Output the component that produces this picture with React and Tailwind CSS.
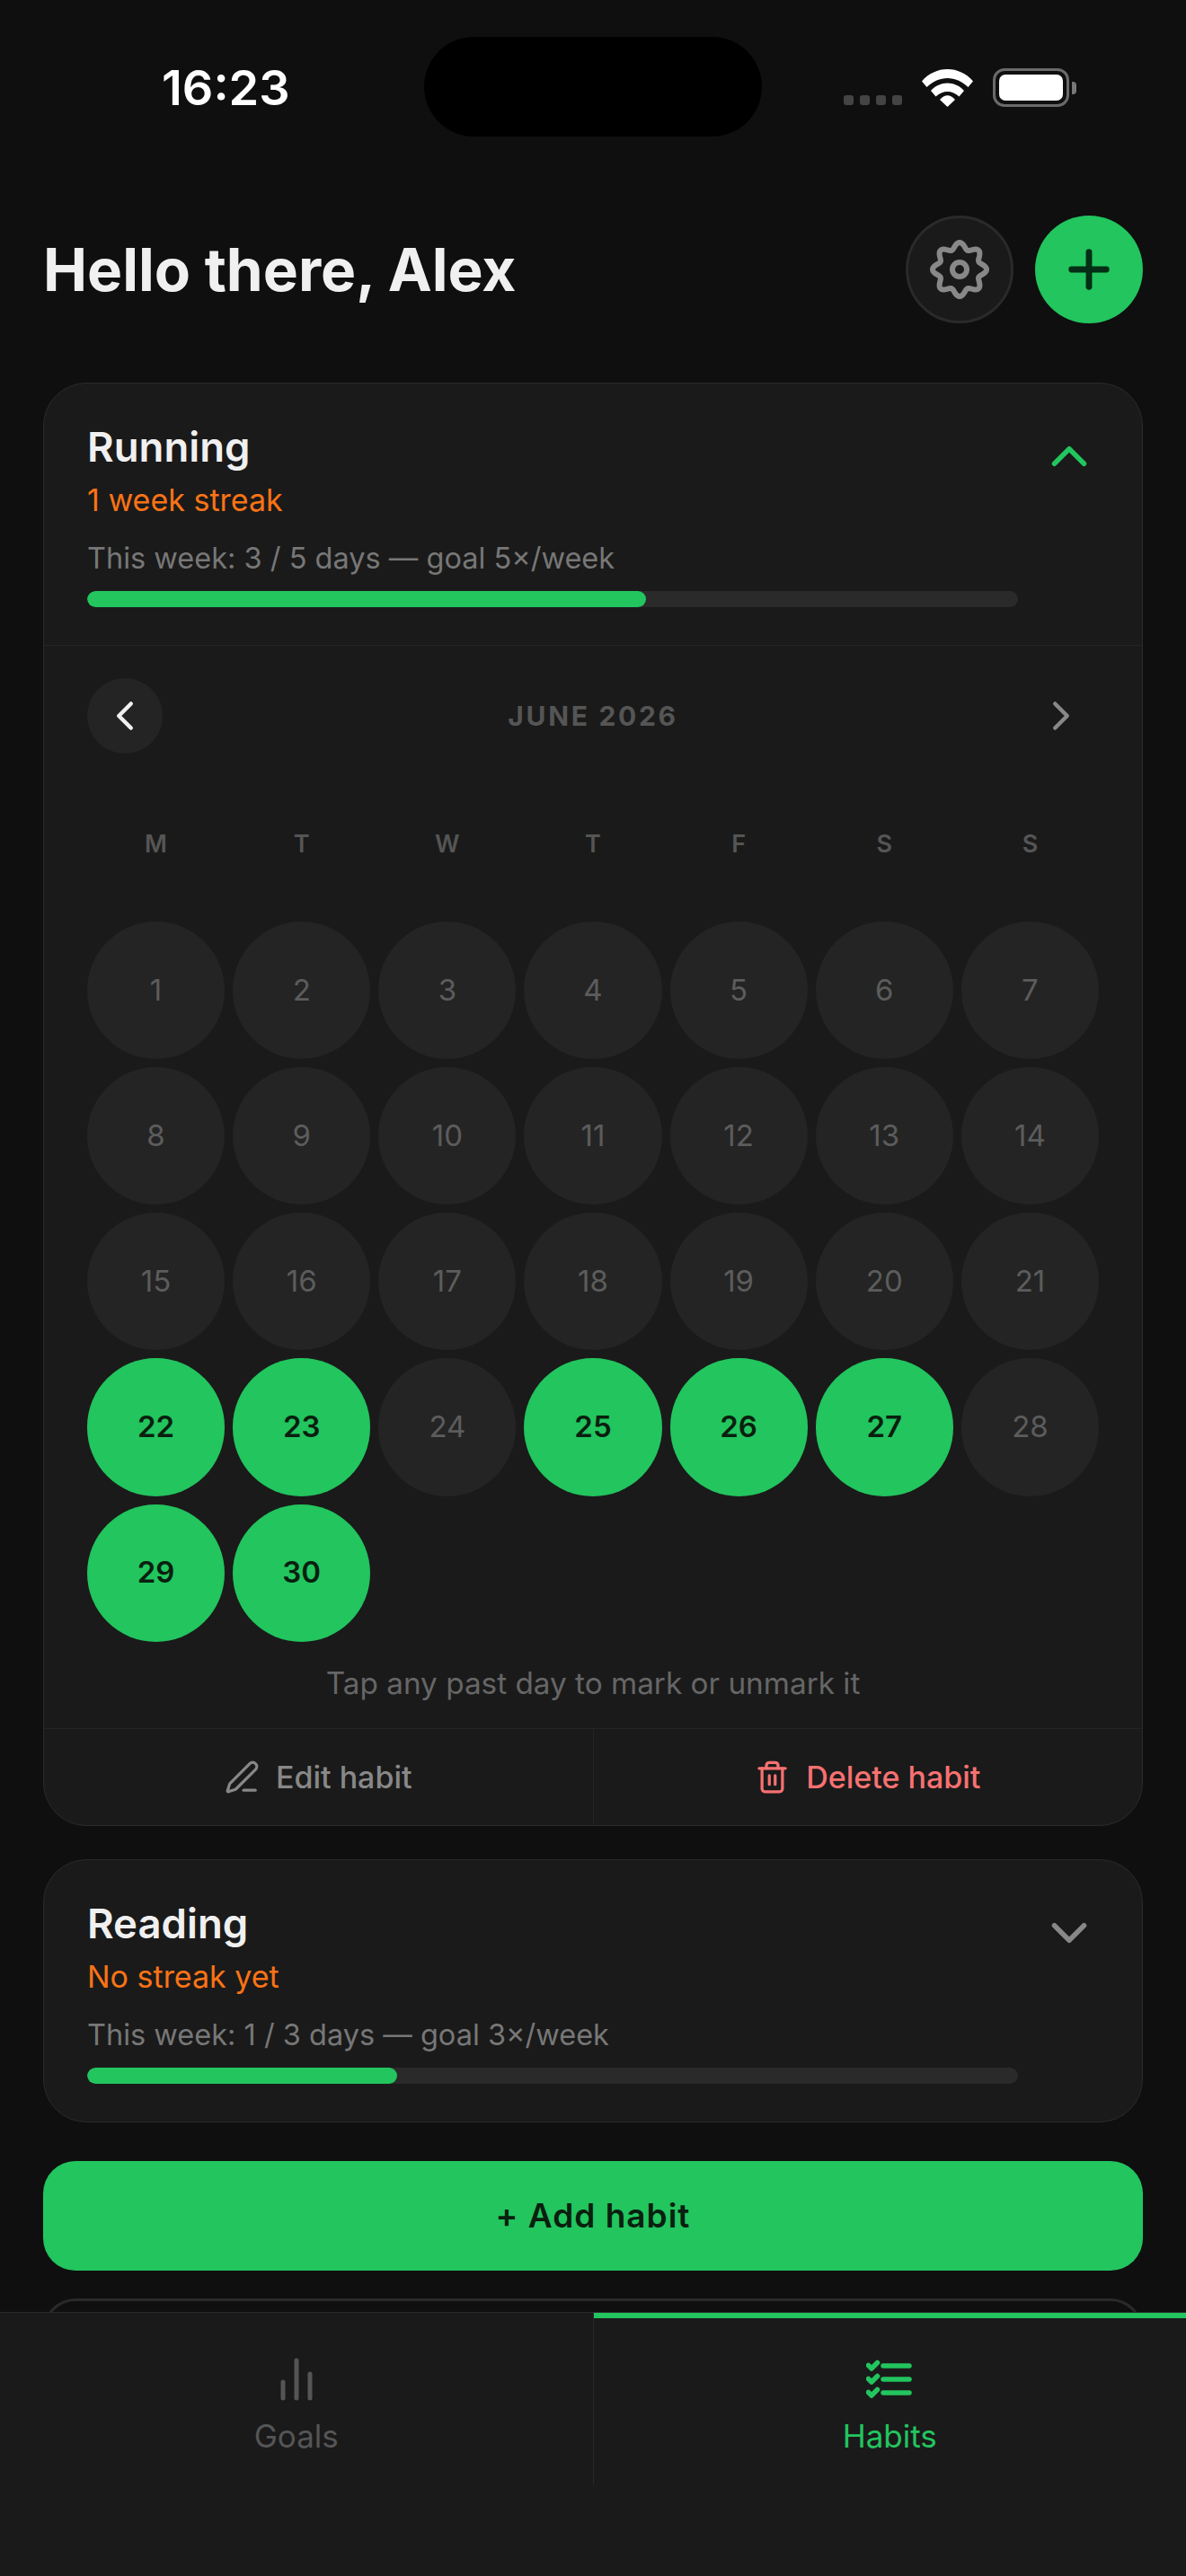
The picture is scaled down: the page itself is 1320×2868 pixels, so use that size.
import React from "react";
import { Plus, ChevronUp, ChevronDown, ChevronLeft, ChevronRight, PenLine, Trash2 } from "lucide-react";

const done = [22, 23, 25, 26, 27, 29, 30];
const days = Array.from({ length: 30 }, (_, i) => i + 1);
const weekdays = ["M", "T", "W", "T", "F", "S", "S"];

const gearPath =
  Array.from({ length: 240 }, (_, i) => {
    const t = (i / 240) * Math.PI * 2;
    const r = 26.5 + 3.5 * Math.cos(8 * t);
    const x = 36 + r * Math.sin(t);
    const y = 36 - r * Math.cos(t);
    return (i === 0 ? "M" : "L") + x.toFixed(2) + " " + y.toFixed(2);
  }).join(" ") + " Z";

function Gear() {
  return (
    <svg width="72" height="72" viewBox="0 0 72 72" fill="none" stroke="#888" strokeWidth="6" strokeLinejoin="round">
      <path d={gearPath} />
      <circle cx="36" cy="36" r="8" />
    </svg>
  );
}

function Wifi() {
  return (
    <svg width="57" height="42" viewBox="0 0 57 42" fill="#fff">
      <path d="M0 13.5C15-4.5 42-4.5 57 13.5L51.5 20C38 6.5 19 6.5 5.5 20Z" />
      <path d="M10 24C20 12.5 37 12.5 47 24L41.5 30.5C34 23 23 23 15.5 30.5Z" />
      <path d="M20 34C25 27.5 32 27.5 37 34L28.5 42Z" />
    </svg>
  );
}

function Battery() {
  return (
    <div className="flex items-center gap-[3px]">
      <div className="w-[85px] h-[43px] rounded-[13px] border-[3px] border-[#6a6a6a] p-[4px]">
        <div className="w-full h-full rounded-[7px] bg-white" />
      </div>
      <div className="w-[5px] h-[14px] rounded-r-[4px] bg-[#777]" />
    </div>
  );
}

function Bars() {
  return (
    <svg width="40" height="48" viewBox="0 0 40 48" fill="none" stroke="#555" strokeWidth="5" strokeLinecap="round">
      <path d="M5 45V27M20 45V3M35 45V18" />
    </svg>
  );
}

function ListChecks() {
  return (
    <svg width="52" height="48" viewBox="0 0 52 48" fill="none" stroke="#22c55e" strokeWidth="5.5" strokeLinecap="round" strokeLinejoin="round">
      <path d="M19 9h29M19 24h29M19 39h29" />
      <path d="M2.5 8.5 6 12 12.5 5.5M2.5 23.5 6 27 12.5 20.5M2.5 38.5 6 42 12.5 35.5" />
    </svg>
  );
}

function HabitHeader({ name, streak, week, pct, open }) {
  const Chevron = open ? ChevronUp : ChevronDown;
  return (
    <div className="flex gap-[24px] px-[48px] pt-[48px] pb-[42px]">
      <div className="flex-1 min-w-0">
        <div className="text-[45.5px] leading-[45px] font-semibold text-[#f0f0f0]">{name}</div>
        <div className="mt-[14px] text-[34px] leading-[45px] text-[#f97316]">{streak}</div>
        <div className="mt-[22px] text-[32.5px] leading-[42px] text-[#777]">{week}</div>
        <div className="mt-[15px] h-[18px] rounded-full bg-[#2a2a2a] overflow-hidden">
          <div className="h-full rounded-full bg-[#22c55e]" style={{ width: pct + "%" }} />
        </div>
      </div>
      <Chevron size={66} strokeWidth={2} className={open ? "text-[#22c55e]" : "text-[#888]"} />
    </div>
  );
}

function Calendar() {
  return (
    <div className="border-t border-[#242424] px-[48px] pt-[36px]">
      <div className="flex items-center justify-between">
        <div className="w-[84px] h-[84px] rounded-full bg-[#242424] flex items-center justify-center text-[#f0f0f0]">
          <ChevronLeft size={54} strokeWidth={2} />
        </div>
        <div className="text-[30px] leading-[36px] font-bold tracking-[2.7px] text-[#555]">JUNE 2026</div>
        <div className="w-[84px] h-[84px] flex items-center justify-center text-[#888]">
          <ChevronRight size={54} strokeWidth={2} />
        </div>
      </div>
      <div className="grid grid-cols-7 gap-x-[9px] mt-[83px] mb-[68px]">
        {weekdays.map((d, i) => (
          <div key={i} className="text-center text-[27px] leading-[36px] font-semibold text-[#555]">{d}</div>
        ))}
      </div>
      <div className="grid grid-cols-7 gap-[9px]">
        {days.map((d) => {
          const on = done.includes(d);
          return (
            <div
              key={d}
              className={
                on
                  ? "aspect-square rounded-full bg-[#22c55e] flex items-center justify-center text-[33px] font-semibold text-[#0a1f0f]"
                  : "aspect-square rounded-full bg-[#242424] flex items-center justify-center text-[33px] text-[#5c5c5c]"
              }
            >
              {d}
            </div>
          );
        })}
      </div>
      <div className="mt-[25px] mb-[29px] text-center text-[33.3px] leading-[42px] text-[#666]">Tap any past day to mark or unmark it</div>
    </div>
  );
}

export default function App() {
  return (
    <div className="w-[1320px] h-[2868px] relative flex flex-col overflow-hidden bg-[#0f0f0f] font-['Inter',sans-serif]">
      <div className="absolute top-[41px] left-[472px] w-[376px] h-[111px] rounded-full bg-black" />
      <div className="flex-1 min-h-0 overflow-hidden">
        <div className="h-[195px] flex items-center justify-between pl-[180px] pr-[122px]">
          <span className="text-[54px] font-semibold text-white">16:23</span>
          <div className="flex items-end gap-[22px]">
            <div className="flex gap-[7px] mb-[2px]">
              {[0, 1, 2, 3].map((i) => (
                <div key={i} className="w-[11px] h-[11px] rounded-[3px] bg-[#444]" />
              ))}
            </div>
            <Wifi />
            <Battery />
          </div>
        </div>
        <div className="mt-[45px] px-[48px] flex items-center justify-between">
          <h1 className="text-[65.7px] font-bold text-[#f0f0f0]">Hello there, Alex</h1>
          <div className="flex gap-[24px]">
            <div className="w-[120px] h-[120px] rounded-full bg-[#1a1a1a] border-[3px] border-[#2a2a2a] flex items-center justify-center">
              <Gear />
            </div>
            <div className="w-[120px] h-[120px] rounded-full bg-[#22c55e] flex items-center justify-center text-[#052e16]">
              <Plus size={66} strokeWidth={2.5} />
            </div>
          </div>
        </div>

        <div className="mt-[66px] mx-[48px] rounded-[48px] border border-[#2a2a2a] bg-[#1a1a1a]">
          <HabitHeader name="Running" streak="1 week streak" week="This week: 3 / 5 days — goal 5×/week" pct={60} open />
          <Calendar />
          <div className="flex border-t border-[#242424] h-[108px]">
            <div className="flex-1 flex items-center justify-center gap-[18px] text-[#888] text-[34px] font-medium border-r border-[#242424]">
              <PenLine size={39} strokeWidth={2} />
              <span>Edit habit</span>
            </div>
            <div className="flex-1 flex items-center justify-center gap-[18px] text-[#f87171] text-[34px] font-medium">
              <Trash2 size={39} strokeWidth={2} />
              <span>Delete habit</span>
            </div>
          </div>
        </div>

        <div className="mt-[37px] mx-[48px] rounded-[48px] border border-[#2a2a2a] bg-[#1a1a1a]">
          <HabitHeader name="Reading" streak="No streak yet" week="This week: 1 / 3 days — goal 3×/week" pct={33.3} />
        </div>

        <div className="mt-[43px] mx-[48px] h-[122px] rounded-[36px] bg-[#22c55e] flex items-center justify-center text-[37px] font-semibold tracking-[1px] text-[#0a1f0f]">
          + Add habit
        </div>

        <div className="mt-[31px] mx-[48px] h-[120px] rounded-[36px] border-[3px] border-[#2a2a2a]" />
      </div>

      <div className="shrink-0 h-[294px] border-t border-[#2a2a2a] bg-[#1a1a1a] pb-[102px] flex">
        <div className="flex-1 flex flex-col items-center gap-[19px] border-r border-[#2a2a2a] pt-[50px]">
          <Bars />
          <span className="text-[35px] leading-[40px] font-normal text-[#555]">Goals</span>
        </div>
        <div className="flex-1 flex flex-col items-center gap-[19px] border-t-[6px] border-[#22c55e] pt-[44px]">
          <ListChecks />
          <span className="text-[35px] leading-[40px] font-normal text-[#22c55e]">Habits</span>
        </div>
      </div>
    </div>
  );
}
